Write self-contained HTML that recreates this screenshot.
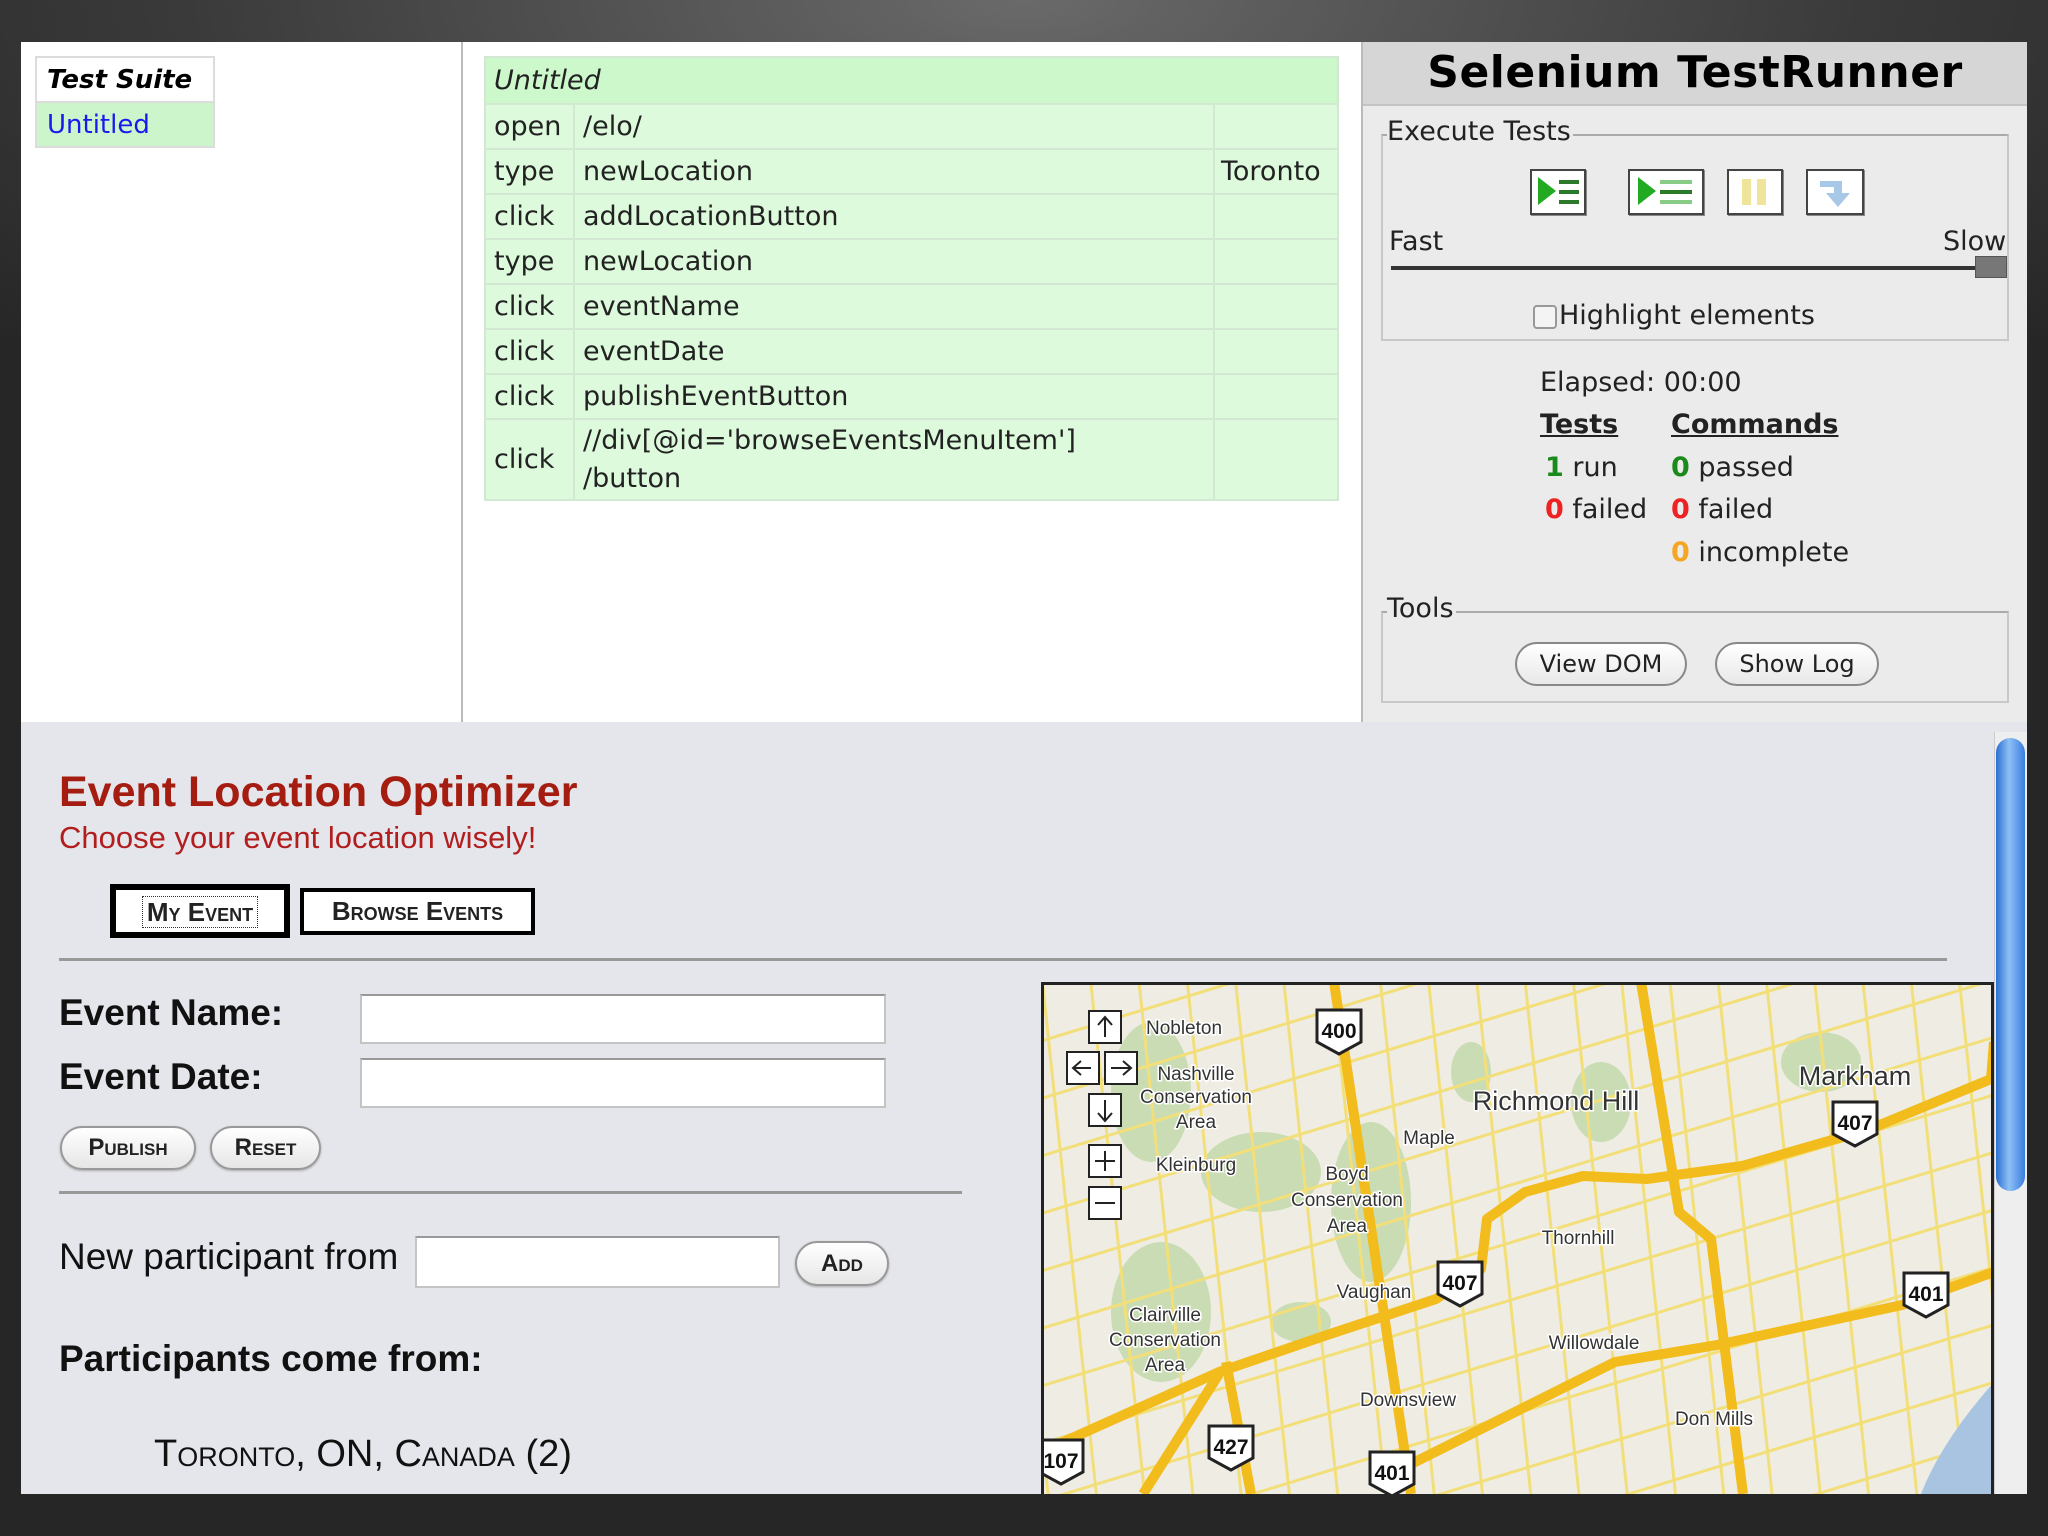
<!DOCTYPE html>
<html><head><meta charset="utf-8"><style>
*{margin:0;padding:0;box-sizing:border-box}
body{width:2048px;height:1536px;overflow:hidden;position:relative;background:radial-gradient(ellipse 1400px 500px at 1024px 0px,#6a6a6a,#3a3a3a 60%,#262626);font-family:"DejaVu Sans",sans-serif}
.a{position:absolute}
#left{left:21px;top:42px;width:442px;height:680px;background:#fff;border-right:2px solid #bbb}
#mid{left:463px;top:42px;width:898px;height:680px;background:#fff}
#right{left:1361px;top:42px;width:666px;height:680px;background:#ebebeb;border-left:2px solid #bbb}
table{border-collapse:collapse}
#suite{left:14px;top:14px;width:180px;font-size:26px}
#suite td{border:2px solid #dcdcdc;padding:4px 10px;height:45px}
#cmd{left:21px;top:14px;width:855px;font-size:27px;color:#222;background:#dfd;table-layout:fixed}
#cmd td{border:2px solid #d2e8d2;padding:0 8px;height:45px;background:#ddfadd;white-space:nowrap}
.tl{font-weight:bold;font-size:44px;text-align:center;line-height:62px;background:#d6d6d6;height:64px;border-bottom:2px solid #c4c4c4;letter-spacing:.5px}
.fs{border:2px solid #c8c8c8;border-top-color:#aaa}
.lg{position:absolute;background:#ebebeb;font-size:27px;top:-20px;left:4px;padding-right:2px;color:#222}
.ib{position:absolute;width:56px;height:46px;background:#fff;border:2px solid #444;box-shadow:1px 1px 0 #888}
.rb{position:absolute;height:44px;border:2px solid #888;border-radius:22px;background:linear-gradient(#fff,#e8e8e8);font-size:24px;text-align:center;line-height:40px;color:#222}
.st{position:absolute;font-size:27px;color:#222}
#bot{left:21px;top:722px;width:2006px;height:772px;background:#e5e6eb;font-family:"Liberation Sans",Arial,sans-serif}
.tab{position:absolute;background:#fff;border:4px solid #000;font-weight:bold;font-variant:small-caps;font-size:26px;text-align:center;color:#222}
.inp{position:absolute;background:#fff;border:2px solid #c4c4c4;border-top-color:#999}
.pb{position:absolute;border:2px solid #999;border-radius:24px;background:linear-gradient(#fff,#e6e6e6);font-weight:bold;font-variant:small-caps;font-size:24px;text-align:center;color:#222;box-shadow:0 1px 2px #aaa}
.lbl{position:absolute;font-weight:bold;font-size:37px;color:#111}
</style></head><body>
<div class="a" id="left">
 <table class="a" id="suite"><tr><td style="font-weight:bold;font-style:italic;background:#fff">Test Suite</td></tr><tr><td style="background:#ccf5cc;color:#1a1aee">Untitled</td></tr></table>
</div>
<div class="a" id="mid">
 <table class="a" id="cmd">
 <colgroup><col style="width:89px"><col style="width:640px"><col></colgroup>
 <tr><td colspan="3" style="background:#ccf8cc;font-style:italic;height:47px">Untitled</td></tr>
 <tr><td>open</td><td>/elo/</td><td></td></tr>
 <tr><td>type</td><td>newLocation</td><td style="padding:0 6px">Toronto</td></tr>
 <tr><td>click</td><td>addLocationButton</td><td></td></tr>
 <tr><td>type</td><td>newLocation</td><td></td></tr>
 <tr><td>click</td><td>eventName</td><td></td></tr>
 <tr><td>click</td><td>eventDate</td><td></td></tr>
 <tr><td>click</td><td>publishEventButton</td><td></td></tr>
 <tr><td style="height:81px">click</td><td style="line-height:38px">//div[@id='browseEventsMenuItem']<br>/button</td><td></td></tr>
 </table>
</div>
<div class="a" id="right">
 <div class="tl">Selenium TestRunner</div>
 <div class="a fs" style="left:18px;top:92px;width:628px;height:207px"><div class="lg">Execute Tests</div>
  <div class="ib" style="left:147px;top:33px"><svg width="52" height="42"><path d="M6 6 L24 20 L6 34Z" fill="#2a2"/><rect x="27" y="9" width="20" height="4" fill="#2a7a2a"/><rect x="27" y="19" width="20" height="4" fill="#2a7a2a"/><rect x="27" y="29" width="20" height="4" fill="#2a7a2a"/></svg></div>
  <div class="ib" style="left:245px;top:33px;width:76px"><svg width="72" height="42"><path d="M8 6 L26 20 L8 34Z" fill="#2a2"/><rect x="30" y="9" width="32" height="4" fill="#8c8"/><rect x="30" y="19" width="32" height="4" fill="#2a7a2a"/><rect x="30" y="29" width="32" height="4" fill="#8c8"/></svg></div>
  <div class="ib" style="left:344px;top:33px"><svg width="52" height="42"><rect x="13" y="8" width="9" height="26" fill="#eee49a"/><rect x="28" y="8" width="9" height="26" fill="#eee49a"/></svg></div>
  <div class="ib" style="left:423px;top:33px;width:58px"><svg width="54" height="42"><path d="M12 10 H34 V22 H42 L30 36 L18 22 H26 V16 H12Z" fill="#a8c8e8"/></svg></div>
  <div class="st" style="left:6px;top:90px">Fast</div><div class="st" style="left:560px;top:90px">Slow</div>
  <div class="a" style="left:8px;top:130px;width:590px;height:4px;background:#333"></div>
  <div class="a" style="left:592px;top:120px;width:32px;height:22px;background:#777;border:1px solid #555"></div>
  <div class="a" style="left:150px;top:169px;width:24px;height:24px;border:2px solid #999;border-radius:4px;background:#f4f4f4"></div>
  <div class="st" style="left:176px;top:164px">Highlight elements</div>
 </div>
 <div class="st" style="left:177px;top:325px">Elapsed: 00:00</div>
 <div class="st" style="left:177px;top:367px;font-weight:bold;text-decoration:underline">Tests</div>
 <div class="st" style="left:308px;top:367px;font-weight:bold;text-decoration:underline">Commands</div>
 <div class="st" style="left:182px;top:410px"><b style="color:#1a8a1a">1</b> run</div>
 <div class="st" style="left:182px;top:452px"><b style="color:#e22">0</b> failed</div>
 <div class="st" style="left:308px;top:410px"><b style="color:#1a8a1a">0</b> passed</div>
 <div class="st" style="left:308px;top:452px"><b style="color:#e22">0</b> failed</div>
 <div class="st" style="left:308px;top:495px"><b style="color:#f5a623">0</b> incomplete</div>
 <div class="a fs" style="left:18px;top:569px;width:628px;height:92px"><div class="lg">Tools</div>
  <div class="rb" style="left:132px;top:29px;width:172px">View DOM</div>
  <div class="rb" style="left:332px;top:29px;width:164px">Show Log</div>
 </div>
</div>
<div class="a" id="bot">
 <div class="a" style="left:38px;top:46px;font-size:43px;font-weight:bold;color:#a51c10">Event Location Optimizer</div>
 <div class="a" style="left:38px;top:98px;font-size:31px;color:#b21e1e">Choose your event location wisely!</div>
 <div class="tab" style="left:89px;top:162px;width:180px;height:54px;line-height:44px;border-width:6px"><span style="border:1px dotted #333;padding:0 4px">My Event</span></div>
 <div class="tab" style="left:279px;top:166px;width:235px;height:47px;line-height:39px">Browse Events</div>
 <div class="a" style="left:38px;top:236px;width:1888px;height:3px;background:#999"></div>
 <div class="lbl" style="left:38px;top:270px">Event Name:</div>
 <div class="lbl" style="left:38px;top:334px">Event Date:</div>
 <div class="inp" style="left:339px;top:272px;width:526px;height:50px"></div>
 <div class="inp" style="left:339px;top:336px;width:526px;height:50px"></div>
 <div class="pb" style="left:39px;top:404px;width:136px;height:44px;line-height:40px">Publish</div>
 <div class="pb" style="left:189px;top:404px;width:111px;height:44px;line-height:40px">Reset</div>
 <div class="a" style="left:38px;top:469px;width:903px;height:3px;background:#999"></div>
 <div class="a" style="left:38px;top:514px;font-size:37px;color:#111">New participant from</div>
 <div class="inp" style="left:394px;top:514px;width:365px;height:52px"></div>
 <div class="pb" style="left:774px;top:519px;width:94px;height:45px;line-height:41px">Add</div>
 <div class="lbl" style="left:38px;top:616px">Participants come from:</div>
 <div class="a" style="left:133px;top:711px;font-size:38px;font-variant:small-caps;color:#111">Toronto, ON, Canada (2)</div>
 <div class="a" style="left:1973px;top:10px;width:33px;height:762px;background:#eee;border-left:1px solid #ccc"></div>
 <div class="a" style="left:1975px;top:16px;width:29px;height:453px;border-radius:15px;background:linear-gradient(90deg,#2a6fd0,#8ec0f6 45%,#3a7ee0)"></div>
</div>
<svg class="a" style="left:1041px;top:982px" width="953" height="512" font-family="Liberation Sans,Arial,sans-serif">
<defs>
<pattern id="p1" width="55" height="55" patternUnits="userSpaceOnUse" patternTransform="rotate(-17)"><rect width="55" height="55" fill="none"/><rect y="0" width="55" height="3" fill="#f3df7a"/></pattern>
<pattern id="p2" width="48" height="48" patternUnits="userSpaceOnUse" patternTransform="rotate(-6)"><rect x="0" width="3" height="48" fill="#f3df7a"/></pattern>
</defs>
<rect width="953" height="512" fill="#efece4"/>
<g fill="#c9dcb4">
<ellipse cx="110" cy="110" rx="40" ry="70"/><ellipse cx="220" cy="190" rx="60" ry="40"/><ellipse cx="330" cy="220" rx="40" ry="80"/><ellipse cx="120" cy="330" rx="50" ry="70"/><ellipse cx="560" cy="120" rx="30" ry="40"/><ellipse cx="780" cy="80" rx="40" ry="30"/><ellipse cx="430" cy="90" rx="20" ry="30"/><ellipse cx="260" cy="340" rx="30" ry="20"/>
</g>
<rect width="953" height="512" fill="url(#p1)"/>
<rect width="953" height="512" fill="url(#p2)"/>
<path d="M953 400 L953 512 L880 512 Q900 460 953 400Z" fill="#a8c4e0"/>
<g fill="none" stroke="#f2bc1c" stroke-width="10" stroke-linejoin="round">
<path d="M293 0 L370 512"/>
<path d="M600 0 L638 230 L670 257 L702 512"/>
<path d="M0 470 L178 390 L286 353 L395 317 L440 287 L446 237 L484 210 L542 194 L606 197 L701 184 L829 147 L950 97"/>
<path d="M950 97 L953 60"/>
<path d="M102 512 L178 392"/>
<path d="M344 495 L574 380 L676 363 L861 323 L953 290"/>
<path d="M185 380 L210 512"/>
</g>
<g font-size="19" fill="#333" text-anchor="middle" stroke="#fff" stroke-width="3" paint-order="stroke">
<text x="143" y="52">Nobleton</text><text x="155" y="98">Nashville</text><text x="155" y="121">Conservation</text><text x="155" y="146">Area</text>
<text x="155" y="189">Kleinburg</text><text x="388" y="162">Maple</text><text x="306" y="198">Boyd</text><text x="306" y="224">Conservation</text><text x="306" y="250">Area</text>
<text x="537" y="262">Thornhill</text><text x="333" y="316">Vaughan</text><text x="124" y="339">Clairville</text><text x="124" y="364">Conservation</text><text x="124" y="389">Area</text>
<text x="553" y="367">Willowdale</text><text x="367" y="424">Downsview</text><text x="673" y="443">Don Mills</text>
<text x="515" y="128" font-size="27">Richmond Hill</text><text x="814" y="103" font-size="27">Markham</text>
</g>
<g font-size="21" font-weight="bold" text-anchor="middle" fill="#111">
<g transform="translate(298,48)"><path d="M-22 -20 H22 V12 L0 24 L-22 12Z" fill="#fff" stroke="#222" stroke-width="3"/><text y="8">400</text></g>
<g transform="translate(814,140)"><path d="M-22 -20 H22 V12 L0 24 L-22 12Z" fill="#fff" stroke="#222" stroke-width="3"/><text y="8">407</text></g>
<g transform="translate(419,300)"><path d="M-22 -20 H22 V12 L0 24 L-22 12Z" fill="#fff" stroke="#222" stroke-width="3"/><text y="8">407</text></g>
<g transform="translate(885,311)"><path d="M-22 -20 H22 V12 L0 24 L-22 12Z" fill="#fff" stroke="#222" stroke-width="3"/><text y="8">401</text></g>
<g transform="translate(190,464)"><path d="M-22 -20 H22 V12 L0 24 L-22 12Z" fill="#fff" stroke="#222" stroke-width="3"/><text y="8">427</text></g>
<g transform="translate(351,490)"><path d="M-22 -20 H22 V12 L0 24 L-22 12Z" fill="#fff" stroke="#222" stroke-width="3"/><text y="8">401</text></g>
<g transform="translate(20,478)"><path d="M-22 -20 H22 V12 L0 24 L-22 12Z" fill="#fff" stroke="#222" stroke-width="3"/><text y="8">107</text></g>
</g>
<g fill="#fff" stroke="#222" stroke-width="2">
<rect x="48" y="29" width="32" height="32"/><rect x="26" y="70" width="32" height="32"/><rect x="64" y="70" width="32" height="32"/><rect x="48" y="112" width="32" height="32"/><rect x="48" y="163" width="32" height="32"/><rect x="48" y="205" width="32" height="32"/>
</g>
<g fill="none" stroke="#222" stroke-width="2">
<path d="M64 55 V36 M57 43 L64 35 L71 43"/><path d="M50 86 H33 M40 79 L32 86 L40 93"/><path d="M70 86 H89 M82 79 L90 86 L82 93"/><path d="M64 118 V138 M57 131 L64 139 L71 131"/><path d="M64 169 V189 M54 179 H74"/><path d="M54 221 H74"/>
</g>
<rect x="1.5" y="1.5" width="950" height="512" fill="none" stroke="#222" stroke-width="3"/>
</svg>
</body></html>
